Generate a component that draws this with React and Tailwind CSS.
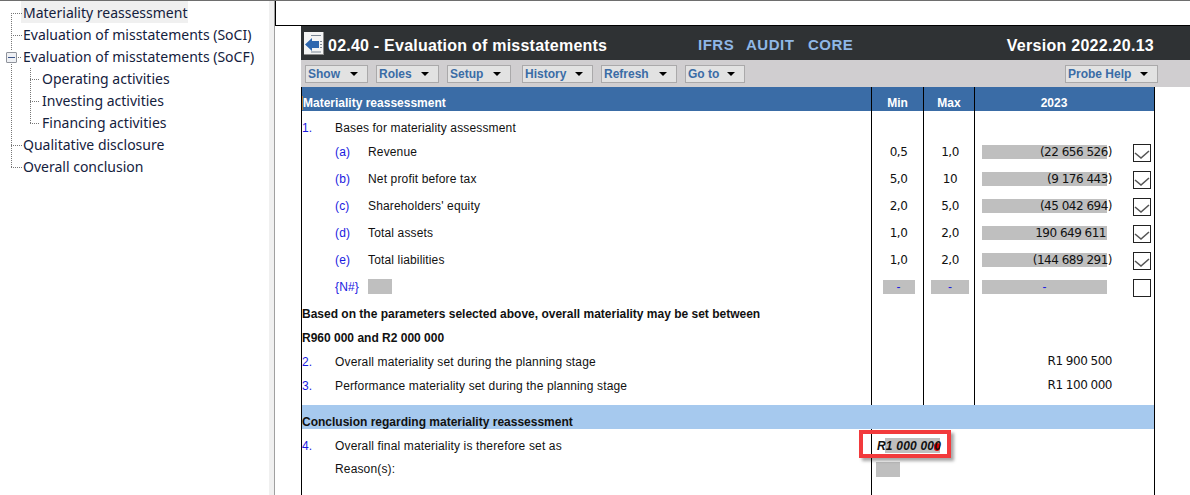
const TREE = [
    { label: "Materiality reassessment", active: true },
    { label: "Evaluation of misstatements (SoCI)" },
    { label: "Evaluation of misstatements (SoCF)" },
    { label: "Operating activities", child: true },
    { label: "Investing activities", child: true },
    { label: "Financing activities", child: true },
    { label: "Qualitative disclosure" },
    { label: "Overall conclusion" },
];

const MENUS = [
    { label: "Show", width: "w-[63px]" },
    { label: "Roles", width: "w-[63px]" },
    { label: "Setup", width: "w-[64px] mr-[3px]" },
    { label: "History", width: "w-[71px]" },
    { label: "Refresh", width: "w-[76px]" },
    { label: "Go to", width: "w-[60px]" },
];

const BASES = [
    { tag: "(a)", label: "Revenue", min: "0,5", max: "1,0", value: "(22 656 526)" },
    { tag: "(b)", label: "Net profit before tax", min: "5,0", max: "10", value: "(9 176 443)" },
    { tag: "(c)", label: "Shareholders' equity", min: "2,0", max: "5,0", value: "(45 042 694)" },
    { tag: "(d)", label: "Total assets", min: "1,0", max: "2,0", value: "190 649 611" },
    { tag: "(e)", label: "Total liabilities", min: "1,0", max: "2,0", value: "(144 689 291)" },
];

function Menu({ label, width }) {
    return (
        <div className={`${width} h-[18px] flex items-center justify-between pl-[2px] pr-[9px] bg-[#e2e2e2] border border-[#aaa9aa] text-[#3a6ca6] font-bold text-[12px]`}>
            <span>{label}</span>
            <span className="w-0 h-0 border-x-[4px] border-x-transparent border-t-[4px] border-t-black" />
        </div>
    );
}

function Row({ height = "h-[24px]", leftClass = "", left, min, max, value }) {
    return (
        <div className={`${height} grid grid-cols-[569px_52px_51px_1fr] items-stretch`}>
            <div className={`${leftClass} flex items-center min-w-0 whitespace-nowrap tracking-[0.15px]`}>{left}</div>
            <div className="border-l border-black flex items-center justify-center pl-[2px]">{min}</div>
            <div className="border-l border-black flex items-center justify-center pl-[2px]">{max}</div>
            <div className="border-l border-black flex items-center">{value}</div>
        </div>
    );
}

function Label({ num, children }) {
    return (
        <>
            <span className="w-[33px] text-[#1a1ae0]">{num}</span>
            <span>{children}</span>
        </>
    );
}

function SubLabel({ tag, children }) {
    return (
        <>
            <span className="w-[33px]" />
            <span className="w-[33px] text-[#1a1ae0]">{tag}</span>
            <span>{children}</span>
        </>
    );
}

function Check({ checked }) {
    return (
        <span className="w-[18px] h-[18px] mt-[3px] border border-[#222] bg-white flex items-center justify-center">
            {checked && (
                <svg width="16" height="16" viewBox="0 0 16 16" fill="none">
                    <path d="M1 8l6 5 8-7" stroke="#555" strokeWidth="1.6" />
                </svg>
            )}
        </span>
    );
}

const Num = ({ children }) => (
    <span className="font-['DejaVu_Sans'] text-[12px] tracking-[-0.5px] text-[#111] whitespace-nowrap">{children}</span>
);

function Amount({ value, checked }) {
    return (
        <div className="flex items-center pl-[7px] w-full">
            <span className="w-[125px] h-[14px] bg-[#bfbfbf] flex items-center justify-end">
                <span className={value.startsWith("(") ? "-mr-[5px]" : "mr-px"}>
                    <Num>{value}</Num>
                </span>
            </span>
            <span className="ml-[26px] flex">
                <Check checked={checked} />
            </span>
        </div>
    );
}

function Blank({ width }) {
    return <span className={`${width} h-[14px] bg-[#bfbfbf] flex items-center justify-center text-[#1a1ae0]`}>-</span>;
}

export default function App() {
    return (
        <div className="w-[1190px] h-[495px] overflow-hidden flex bg-white border-t border-[#6e6e6e] font-['Liberation_Sans',sans-serif] text-[12px] text-[#111]">
            {/* Tree navigation */}
            <aside className="relative w-[275px] shrink-0 flex font-['Noto_Sans',sans-serif] text-[14px] text-[#14213d]">
                <svg className="absolute left-0 top-0" width="40" height="180" fill="none" stroke="#777" strokeDasharray="1 1" shapeRendering="crispEdges">
                    <path d="M11.5 12V50M11.5 63V166M11 12H22M11 34H22M18 56H22M11 144H22M11 166H22M30.5 67V122M30 78H41M30 100H41M30 122H41" />
                </svg>
                <span className="absolute left-[6px] top-[51px] w-[11px] h-[11px] border border-[#8f939b] rounded-[1px] bg-[#eef0f4] flex items-center justify-center">
                    <span className="w-[7px] h-px bg-[#3b5488]" />
                </span>
                <div className="flex-1 min-w-0">
                    {TREE.map((item) => (
                        <div key={item.label} className={`h-[22px] flex items-start ${item.child ? "pl-[42px]" : "pl-[23px]"}`}>
                            <span className={`h-[22px] leading-[24px] whitespace-nowrap ${item.active ? "bg-[#f0f0f0] pl-[2px] -ml-[2px] pr-[1px]" : ""}`}>{item.label}</span>
                        </div>
                    ))}
                </div>
                <div className="w-[6px] bg-[#f0f0f0] border-r border-[#a0a0a0]" />
            </aside>

            <main className="flex-1 min-w-0 flex flex-col">
                <div className="h-[24px] shrink-0 border-l border-black" />
                <div className="flex-1 min-h-0 border-t border-black pl-[26px] flex flex-col">
                    {/* Title bar */}
                    <div className="h-[34px] shrink-0 bg-[#2f3234] flex items-center pl-[3px] pr-[36px] text-white font-bold">
                        <svg width="20" height="23" viewBox="0 0 20 23" className="shrink-0">
                            <rect width="20" height="23" fill="#f4f4f4" />
                            <path d="M19.5 0V23M0 22.5H20" stroke="#8a8a8a" />
                            <path d="M7 3.5h10M7 20h10M16 9.5h2M16 12.5h2M16 15.5h2" stroke="#7c8794" />
                            <path d="M1 12.5L8 6v3h7v7H8v3z" fill="#2e66ae" />
                        </svg>
                        <span className="ml-[4px] pt-[6px] text-[16px] tracking-[0.23px] w-[370px] whitespace-nowrap">02.40 - Evaluation of misstatements</span>
                        <span className="pt-[4px] w-[48px] text-[15px] text-[#8fb7e6] tracking-[0.5px]">IFRS</span>
                        <span className="pt-[4px] w-[62px] text-[15px] text-[#8fb7e6] tracking-[0.5px]">AUDIT</span>
                        <span className="pt-[4px] text-[15px] text-[#8fb7e6] tracking-[0.5px]">CORE</span>
                        <span className="ml-auto pt-[6px] text-[16px] tracking-[0.27px] whitespace-nowrap">Version 2022.20.13</span>
                    </div>

                    {/* Menu bar */}
                    <div className="h-[27px] shrink-0 bg-[#d0ced0] flex items-center pl-[4px] pr-[32px] gap-[8px]">
                        {MENUS.map((m) => (
                            <Menu key={m.label} {...m} />
                        ))}
                        <div className="ml-auto">
                            <Menu label="Probe Help" width="w-[93px]" />
                        </div>
                    </div>

                    {/* Assessment table */}
                    <div className="flex-1 min-h-0 w-[854px] border-x border-black">
                        <div className="h-[24px] bg-[#3a6ca6] grid grid-cols-[569px_52px_51px_1fr] text-white font-bold leading-[14px]">
                            <div className="flex items-end pb-px">
                                <span className="border-l border-[#b9803f]">Materiality reassessment</span>
                            </div>
                            <div className="border-l border-black flex items-end justify-center pb-px">Min</div>
                            <div className="border-l border-black flex items-end justify-center pb-px">Max</div>
                            <div className="border-l border-black flex items-end justify-center pb-px pr-[21px]">2023</div>
                        </div>
                        <Row height="h-[27px]" leftClass="pt-[6px]" left={<Label num="1.">Bases for materiality assessment</Label>} />
                        {BASES.map((row) => (
                            <Row
                                key={row.tag}
                                height="h-[27px]"
                                left={<SubLabel tag={row.tag}>{row.label}</SubLabel>}
                                min={<Num>{row.min}</Num>}
                                max={<Num>{row.max}</Num>}
                                value={<Amount value={row.value} checked />}
                            />
                        ))}
                        <Row
                            height="h-[27px]"
                            left={
                                <>
                                    <span className="w-[33px]" />
                                    <span className="w-[33px] text-[#1a1ae0]">{"{N#}"}</span>
                                    <span className="w-[24px] h-[15px] bg-[#bfbfbf]" />
                                </>
                            }
                            min={<Blank width="w-[32px]" />}
                            max={<Blank width="w-[38px]" />}
                            value={
                                <div className="flex items-center pl-[7px] w-full">
                                    <Blank width="w-[125px]" />
                                    <span className="ml-[26px] flex">
                                        <Check />
                                    </span>
                                </div>
                            }
                        />
                        <Row height="h-[25px]" leftClass="pt-[3px]" left={<b className="tracking-normal">Based on the parameters selected above, overall materiality may be set between</b>} />
                        <Row leftClass="pt-[2px]" left={<b className="tracking-normal">R960 000 and R2 000 000</b>} />
                        <Row
                            leftClass="pt-[2px]"
                            left={<Label num="2.">Overall materiality set during the planning stage</Label>}
                            value={<span className="ml-auto mr-[42px]"><Num>R1 900 500</Num></span>}
                        />
                        <Row
                            leftClass="pt-[2px]"
                            left={<Label num="3.">Performance materiality set during the planning stage</Label>}
                            value={<span className="ml-auto mr-[42px]"><Num>R1 100 000</Num></span>}
                        />
                        <Row height="h-[8px]" />
                        <div className="h-[24px] bg-[#a6c9ee] flex items-end font-bold leading-[14px]">Conclusion regarding materiality reassessment</div>
                        <div className="h-[28px] grid grid-cols-[569px_1fr]">
                            <div className="flex items-center pt-[6px] tracking-[0.15px]">
                                <Label num="4.">Overall final materiality is therefore set as</Label>
                            </div>
                            <div className="relative border-l border-black">
                                <div className="absolute left-[-13px] top-[1px] w-[92px] h-[28px] border-[4px] border-[#f23a3c] shadow-[3px_3px_3px_rgba(0,0,0,0.35)]" />
                                <span className="absolute left-[13px] top-[9px] w-[55px] h-[15px] bg-[#bfbfbf]" />
                                <span className="absolute left-[62px] top-[14px] w-[6px] h-[8px] rounded-full bg-[#e00000]" />
                                <span className="absolute left-[5px] top-[8px] font-bold italic tracking-[0.2px] whitespace-nowrap">R1 000 000</span>
                            </div>
                        </div>
                        <div className="h-[24px] grid grid-cols-[569px_1fr]">
                            <div className="flex items-center pl-[33px] tracking-[0.15px]">Reason(s):</div>
                            <div className="border-l border-black pt-[5px] pl-[4px]">
                                <div className="w-[24px] h-[15px] bg-[#bfbfbf]" />
                            </div>
                        </div>
                        <div className="h-[24px] grid grid-cols-[569px_1fr]">
                            <div />
                            <div className="border-l border-black" />
                        </div>
                    </div>
                </div>
            </main>
        </div>
    );
}
